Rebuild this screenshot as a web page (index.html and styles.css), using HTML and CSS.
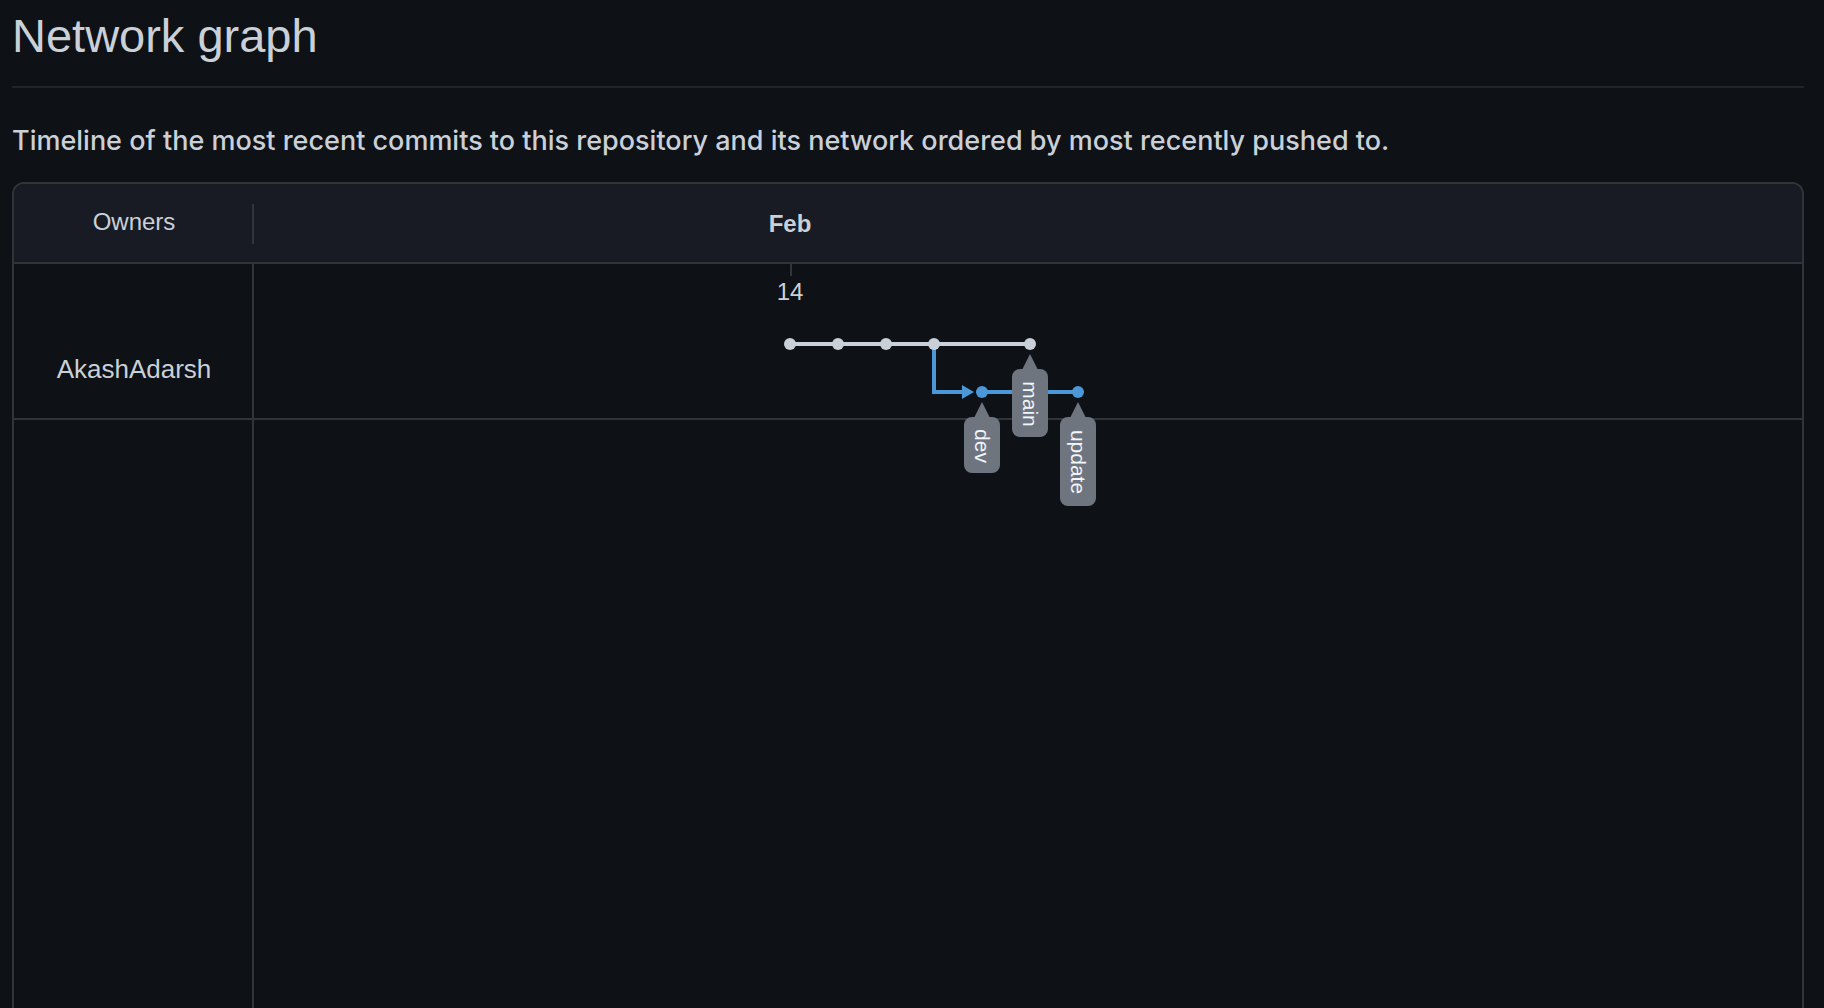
FILE: index.html
```html
<!DOCTYPE html>
<html lang="en">
<head>
<meta charset="utf-8">
<title>Network graph</title>
<link rel="stylesheet" href="styles.css">
</head>
<body>
<main class="page">
  <h1 class="title">Network graph</h1>
  <p class="lead">Timeline of the most recent commits to this repository and its network ordered by most recently pushed to.</p>
  <section class="network" aria-label="Commit timeline">
    <header class="row row-head">
      <div class="owner-head">Owners</div>
      <svg class="months" height="78" aria-label="Months">
        <text class="month" x="536" y="48">Feb</text>
      </svg>
    </header>
    <div class="row row-owner">
      <div class="owner">AkashAdarsh</div>
      <svg class="commits" height="154" role="img" aria-label="Commits on main, dev and update">
        <path class="tick" d="M537 0V12"/>
        <text class="day" x="536" y="36">14</text>
        <path class="branch-line" d="M680 80V128H712"/>
        <path class="arrow" d="M708 121L720 128L708 135Z"/>
        <path class="branch-line" d="M728 128H824"/>
        <path class="main-line" d="M536 80H776"/>
        <g class="main-dots">
          <circle cx="536" cy="80" r="6"/>
          <circle cx="584" cy="80" r="6"/>
          <circle cx="632" cy="80" r="6"/>
          <circle cx="680" cy="80" r="6"/>
          <circle cx="776" cy="80" r="6"/>
        </g>
        <g class="branch-dots">
          <circle cx="728" cy="128" r="6"/>
          <circle cx="824" cy="128" r="6"/>
        </g>
        <g class="tag" transform="translate(728 138)">
          <path d="M0 0L8 16H-8Z"/>
          <rect x="-18" y="15" width="36" height="56" rx="8"/>
          <text transform="rotate(90)" x="44" y="7">dev</text>
        </g>
        <g class="tag" transform="translate(776 90)">
          <path d="M0 0L8 16H-8Z"/>
          <rect x="-18" y="15" width="36" height="68" rx="8"/>
          <text transform="rotate(90)" x="50" y="7">main</text>
        </g>
        <g class="tag" transform="translate(824 138)">
          <path d="M0 0L8 16H-8Z"/>
          <rect x="-18" y="15" width="36" height="89" rx="8"/>
          <text transform="rotate(90)" x="60" y="7">update</text>
        </g>
      </svg>
    </div>
    <div class="row row-rest">
      <div class="owner"></div>
    </div>
  </section>
</main>
</body>
</html>
```
FILE: styles.css
```css
* {
  box-sizing: border-box;
}

body {
  margin: 0;
  background: #0e1116;
  color: #cad0d8;
  font-family: "Liberation Sans", Arial, sans-serif;
}

.page {
  display: flex;
  flex-direction: column;
  min-height: 100vh;
  padding: 0 20px 0 12px;
}

.title {
  margin: 0;
  height: 88px;
  border-bottom: 2px solid #212429;
  font-size: 47px;
  font-weight: 400;
  line-height: 72px;
}

.lead {
  margin: 32px 0 20px;
  font-family: Inter, sans-serif;
  font-size: 27px;
  font-weight: 500;
  line-height: 42px;
}

.network {
  display: flex;
  flex: 1;
  flex-direction: column;
  border: 2px solid #313438;
  border-bottom: 0;
  border-radius: 12px 12px 0 0;
}

.row {
  display: grid;
  grid-template-columns: 240px 1fr;
  border-bottom: 2px solid #313438;
}

.row-head {
  background: #181b23;
  border-radius: 10px 10px 0 0;
}

.owner-head,
.owner {
  padding-left: 2px;
  border-right: 2px solid #313438;
  text-align: center;
}

.owner-head {
  height: 40px;
  margin-top: 20px;
  font-size: 24px;
  line-height: 36px;
}

.owner {
  padding-top: 87px;
  font-size: 26px;
  line-height: 36px;
}

.row-rest {
  flex: 1;
  border-bottom: 0;
}

.months,
.commits {
  display: block;
  width: 100%;
  overflow: visible;
}

.commits {
  position: relative;
}

text {
  fill: #cad0d8;
  font-size: 24px;
  text-anchor: middle;
}

.month {
  font-weight: 700;
}

.tick {
  stroke: #313438;
  stroke-width: 2;
}

.main-line,
.branch-line {
  fill: none;
  stroke: #cad0d8;
  stroke-width: 4;
}

.branch-line {
  stroke: #4c97d7;
}

.main-dots {
  fill: #cad0d8;
}

.branch-dots,
.arrow {
  fill: #4c97d7;
}

.tag {
  fill: #6f757f;
}

.tag text {
  fill: #f0f6fc;
  font-size: 21px;
}
```
